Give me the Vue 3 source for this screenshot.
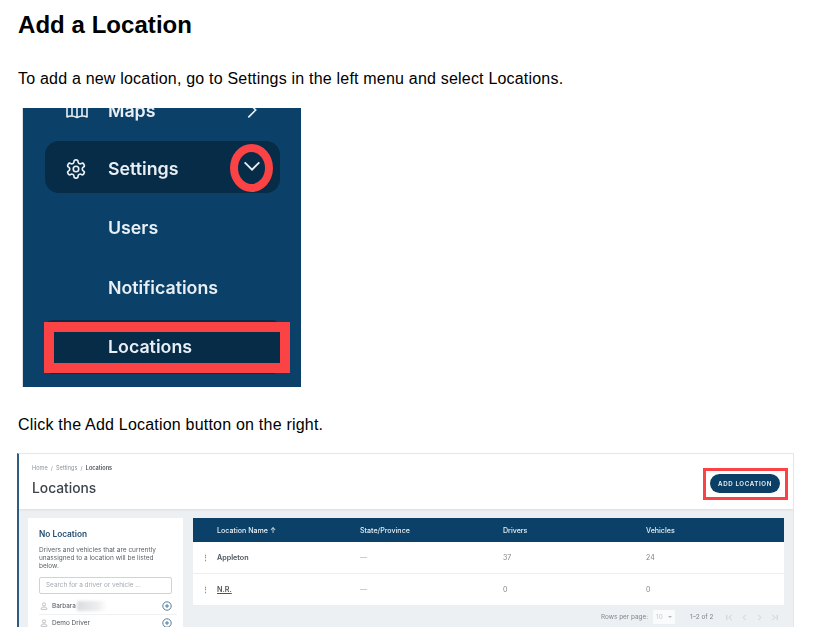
<template>
  <div class="page">
    <h2>Add a Location</h2>
    <p class="intro">To add a new location, go to Settings in the left menu and select Locations.</p>

    <div class="menu-shot">
      <div class="menu-blur">
        <div class="nav-row maps">
          <svg class="nav-icon" viewBox="0 0 24 24" fill="none" stroke="currentColor" stroke-width="1.6" stroke-linejoin="round">
            <path d="M2 6c3-1.500 6-1.500 10 .5 4-2 7-2 10-.5v13c-3-1.500-6-1.500-10 .5-4-2-7-2-10-.5z" />
            <line x1="12" y1="6.500" x2="12" y2="19.500" />
            <line x1="7" y1="5" x2="7" y2="18" />
            <line x1="17" y1="5" x2="17" y2="18" />
          </svg>
          <span>Maps</span>
          <svg class="nav-chevron" viewBox="0 0 24 24" fill="none" stroke="currentColor" stroke-width="1.800">
            <polyline points="8 4 16 12 8 20" />
          </svg>
        </div>
        <div class="nav-row active">
          <svg class="nav-icon" viewBox="0 0 24 24" fill="none" stroke="currentColor" stroke-width="1.800" stroke-linejoin="round">
            <path d="M12.220 2h-.44a2 2 0 0 0-2 2v.18a2 2 0 0 1-1 1.730l-.43.25a2 2 0 0 1-2 0l-.15-.08a2 2 0 0 0-2.730.73l-.22.38a2 2 0 0 0 .73 2.730l.15.1a2 2 0 0 1 1 1.720v.51a2 2 0 0 1-1 1.740l-.15.09a2 2 0 0 0-.73 2.730l.22.38a2 2 0 0 0 2.730.73l.15-.08a2 2 0 0 1 2 0l.43.25a2 2 0 0 1 1 1.730V20a2 2 0 0 0 2 2h.44a2 2 0 0 0 2-2v-.18a2 2 0 0 1 1-1.730l.43-.25a2 2 0 0 1 2 0l.15.08a2 2 0 0 0 2.730-.73l.22-.39a2 2 0 0 0-.73-2.730l-.15-.08a2 2 0 0 1-1-1.740v-.5a2 2 0 0 1 1-1.740l.15-.09a2 2 0 0 0 .73-2.730l-.22-.38a2 2 0 0 0-2.730-.73l-.15.08a2 2 0 0 1-2 0l-.43-.25a2 2 0 0 1-1-1.730V4a2 2 0 0 0-2-2z" />
            <circle cx="12" cy="12" r="3" />
          </svg>
          <span>Settings</span>
          <svg class="nav-chevron down" viewBox="0 0 24 24" fill="none" stroke="currentColor" stroke-width="2">
            <polyline points="4 8 12 16 20 8" />
          </svg>
        </div>
        <div class="sub-list">
          <div class="sub-row">Users</div>
          <div class="sub-row">Notifications</div>
          <div class="sub-row current">Locations</div>
        </div>
      </div>
      <div class="ring"></div>
      <div class="mark-locations"></div>
    </div>

    <p class="step">Click the Add Location button on the right.</p>

    <div class="app-shot">
      <div class="app-blur">
        <header class="app-head">
          <div>
            <div class="crumbs">Home &nbsp;/&nbsp; Settings &nbsp;/&nbsp; <b>Locations</b></div>
            <div class="app-title">Locations</div>
          </div>
          <button class="add-btn">ADD LOCATION</button>
        </header>
        <div class="app-body">
          <aside class="side-card">
            <h4>No Location</h4>
            <p>Drivers and vehicles that are currently unassigned to a location will be listed below.</p>
            <div class="search">Search for a driver or vehicle ...</div>
            <div v-for="d in drivers" :key="d" class="driver">
              <svg class="person" viewBox="0 0 10 10" fill="none" stroke="#9aa3ab" stroke-width="0.800">
                <circle cx="5" cy="3" r="2" />
                <path d="M1.500 9.200V8c0-1 1.500-1.700 3.500-1.700S8.500 7 8.500 8v1.200z" />
              </svg>
              <span>{{ d }}</span>
              <i v-if="d === 'Barbara'" class="smudge"></i>
              <svg class="plus" viewBox="0 0 10 10" fill="none" stroke="#3f6f94" stroke-width="0.900">
                <circle cx="5" cy="5" r="4.200" />
                <path d="M5 3v4M3 5h4" />
              </svg>
            </div>
          </aside>
          <section class="table-wrap">
            <div class="t-row t-head">
              <span>Location Name ↑</span>
              <span>State/Province</span>
              <span>Drivers</span>
              <span>Vehicles</span>
            </div>
            <div v-for="r in rows" :key="r.name" class="t-row">
              <span class="t-name" :class="{ under: r.name === 'N.R.' }"><i class="dots">⋮</i>{{ r.name }}</span>
              <span class="dash">—</span>
              <span>{{ r.drivers }}</span>
              <span>{{ r.vehicles }}</span>
            </div>
            <div class="pager">
              <span>Rows per page:</span>
              <span class="per-page">10 <i class="caret"></i></span>
              <span class="range">1–2 of 2</span>
              <span class="arrows">
                <svg v-for="a in arrows" :key="a" viewBox="0 0 10 10" fill="none" stroke="#c3c9ce" stroke-width="0.900">
                  <path :d="a" />
                </svg>
              </span>
            </div>
          </section>
        </div>
      </div>
      <div class="mark-add"></div>
    </div>
  </div>
</template>

<script setup>
const drivers = ["Barbara", "Demo Driver"];

const rows = [
  { name: "Appleton", drivers: 37, vehicles: 24 },
  { name: "N.R.", drivers: 0, vehicles: 0 },
];

const arrows = [
  "M2 2v6M7.500 2 4.500 5l3 3",
  "M6.500 2 3.500 5l3 3",
  "M3.500 2l3 3-3 3",
  "M8 2v6M2.500 2l3 3-3 3",
];
</script>

<style scoped>
.page {
  height: 627px;
  overflow: hidden;
  padding-left: 18px;
  font-family: "Liberation Sans", Arial, sans-serif;
  color: #000;
  box-sizing: border-box;
}

h2 {
  margin: 0;
  padding-top: 11px;
  font-size: 24px;
  line-height: 28px;
  font-weight: 700;
  letter-spacing: 0.050px;
}

.intro {
  margin: 31px 0 0;
  font-size: 16px;
  line-height: 18px;
  letter-spacing: 0.200px;
}

.step {
  margin: 29px 0 0;
  font-size: 16px;
  line-height: 18px;
  letter-spacing: 0.210px;
}

/* first screenshot: side menu */
.menu-shot {
  position: relative;
  width: 279px;
  height: 279px;
  margin: 20px 0 0 4px;
  overflow: hidden;
  background: #0b4168;
  border-left: 1px solid #d8dde1;
  box-sizing: border-box;
}

.menu-blur {
  display: flex;
  flex-direction: column;
  margin-top: -24px;
  padding: 0 21px 0 22px;
  color: #e9eff4;
  font-family: Inter, "Noto Sans", sans-serif;
  font-size: 17.800px;
  font-weight: 600;
  filter: blur(0.550px);
}

.nav-row {
  display: flex;
  align-items: center;
  height: 52px;
  padding: 0 17px 0 20px;
  gap: 21px;
  flex-shrink: 0;
  box-sizing: border-box;
}

.nav-row.maps {
  gap: 19px;
}

.nav-row.active {
  margin-top: 5px;
  padding-top: 3px;
  background: #062c48;
  border-radius: 14px;
}

.nav-icon {
  width: 22px;
  height: 22px;
}

.maps .nav-icon {
  width: 24px;
  height: 24px;
}

.nav-chevron {
  width: 22px;
  height: 22px;
  margin-left: auto;
}

.maps .nav-chevron {
  width: 22px;
  height: 22px;
}

.nav-chevron.down {
  margin-top: -5px;
}

.sub-list {
  margin-top: 5px;
}

.sub-row {
  height: 59.500px;
  line-height: 60px;
  padding-left: 63px;
}

.sub-row.current {
  background: #062c48;
  border-radius: 8px;
  margin-top: 3px;
  height: 54px;
  line-height: 54px;
}

.ring {
  position: absolute;
  left: 207px;
  top: 36px;
  width: 43px;
  height: 48px;
  border: 8px solid #fb4245;
  border-radius: 50%;
  box-sizing: border-box;
}

.mark-locations {
  position: absolute;
  left: 21px;
  top: 214px;
  width: 246px;
  height: 51px;
  border: 10px solid #fb4245;
  box-sizing: border-box;
}

/* second screenshot: locations page */
.app-shot {
  position: relative;
  width: 777px;
  height: 200px;
  margin: 19px 0 0 -1px;
  overflow: hidden;
  background: #edf0f3;
  box-sizing: border-box;
  border-top: 1px solid #e4e6e8;
  border-right: 1px solid #e4e6e8;
  border-left: 2px solid #2d5c80;
}

.app-blur {
  font-family: Inter, "Noto Sans", sans-serif;
  color: #50585f;
  filter: blur(0.450px);
}

.app-head {
  display: flex;
  justify-content: space-between;
  align-items: center;
  height: 55px;
  padding: 0 13px 0 13px;
  background: #fff;
  box-shadow: 0 1px 2px rgba(0, 0, 0, 0.08);
}

.crumbs {
  font-size: 5.600px;
  color: #8d949a;
  margin-top: -2px;
}

.crumbs b {
  color: #4b5359;
  font-weight: 600;
}

.app-title {
  margin-top: 9px;
  font-size: 13.800px;
  font-weight: 500;
  color: #3c4349;
}

.add-btn {
  width: 70px;
  height: 19px;
  margin-top: 4px;
  padding: 0;
  border: none;
  border-radius: 10px;
  background: #0b3f66;
  color: #eef3f7;
  font-family: inherit;
  font-size: 6.200px;
  font-weight: 600;
  letter-spacing: 0.600px;
}

.app-body {
  display: flex;
  gap: 10px;
  padding: 9px 9px 0 9px;
}

.side-card {
  width: 155px;
  height: 130px;
  padding: 11px 6px 0 11px;
  background: #fff;
  box-sizing: border-box;
  flex-shrink: 0;
}

.side-card h4 {
  margin: 0;
  font-size: 8.300px;
  line-height: 10px;
  font-weight: 600;
  color: #234d70;
}

.side-card p {
  margin: 7px 0 0;
  width: 125px;
  font-size: 6.500px;
  line-height: 8px;
  color: #5b6369;
}

.search {
  margin: 7px 5px 0 0;
  width: 133px;
  height: 17px;
  line-height: 15px;
  padding-left: 6px;
  border: 1px solid #cfd3d7;
  border-radius: 2px;
  box-sizing: border-box;
  font-size: 6.400px;
  color: #a4aab0;
}

.driver {
  display: flex;
  align-items: center;
  height: 16px;
  gap: 4px;
  padding-left: 1px;
  font-size: 6.400px;
  color: #4c545a;
  border-bottom: 1px solid #eef0f2;
}

.search + .driver {
  margin-top: 4px;
}

.person {
  width: 8px;
  height: 8px;
}

.plus {
  width: 10px;
  height: 10px;
  margin-left: auto;
  margin-right: 5px;
}

.smudge {
  width: 30px;
  height: 10px;
  margin-left: -3px;
  background: linear-gradient(90deg, #d9dbdd, #eceeef 70%, #fff);
  filter: blur(1.500px);
}

.table-wrap {
  flex: 1;
}

.t-row {
  display: grid;
  grid-template-columns: 167px 143px 143px 1fr;
  align-items: center;
  height: 32px;
  padding-left: 0;
  background: #fff;
  border-bottom: 1px solid #eceef0;
  box-sizing: border-box;
  font-size: 7px;
  color: #7f878d;
}

.t-row span:first-child {
  padding-left: 24px;
}

.t-head {
  height: 24px;
  background: #0b4168;
  border-bottom: none;
  color: #e7edf2;
  font-size: 7.100px;
  font-weight: 500;
}

.t-name {
  position: relative;
  font-size: 7.200px;
  font-weight: 600;
  color: #4c545a;
}

.under {
  text-decoration: underline;
}

.dots {
  position: absolute;
  left: 9px;
  font-style: normal;
  color: #8a9197;
}

.dash {
  color: #a4aab0;
}

.pager {
  display: flex;
  align-items: center;
  height: 22px;
  padding-left: 408px;
  font-size: 6.400px;
  color: #7f878d;
}

.per-page {
  display: flex;
  align-items: center;
  justify-content: space-between;
  width: 22px;
  height: 14px;
  margin-left: 5px;
  padding: 0 3px;
  box-sizing: border-box;
  background: #fafbfb;
  color: #c6cbcf;
}

.caret {
  border-left: 2px solid transparent;
  border-right: 2px solid transparent;
  border-top: 2px solid #b0b6bb;
}

.range {
  margin-left: 15px;
}

.arrows {
  display: flex;
  gap: 6px;
  margin-left: 12px;
}

.arrows svg {
  width: 9px;
  height: 9px;
}

.mark-add {
  position: absolute;
  left: 684px;
  top: 14px;
  width: 85px;
  height: 32px;
  border: 3.500px solid #fb4245;
  box-sizing: border-box;
}
</style>

<style>
html,
body {
  margin: 0;
  background: #fff;
  overflow: hidden;
}
</style>
